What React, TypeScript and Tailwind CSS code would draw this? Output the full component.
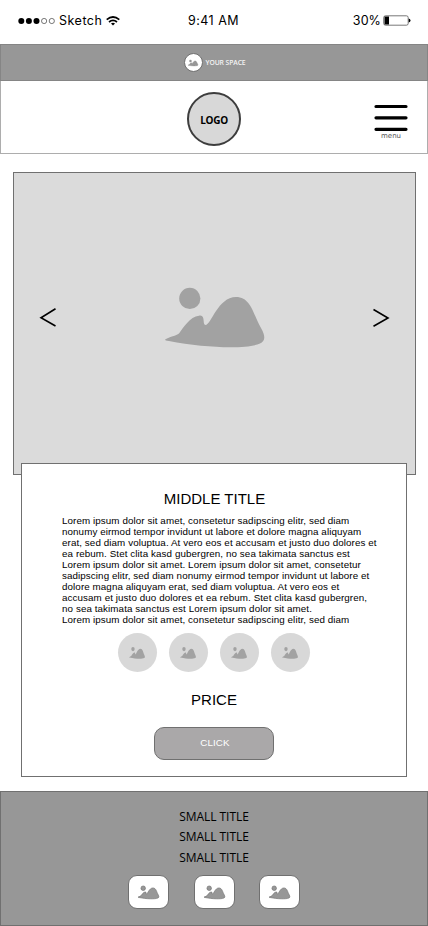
type PictureProps = { className?: string; outlined?: boolean };

function Picture({ className = "", outlined = false }: PictureProps) {
  return (
    <svg
      viewBox="0 0 100 60"
      preserveAspectRatio="none"
      className={`block shrink-0 overflow-visible ${className}`}
      fill={outlined ? "#979797" : "#a2a2a2"}
      stroke={outlined ? "#707070" : "none"}
      strokeWidth={outlined ? 3 : 0}
    >
      <circle cx="24.8" cy="10.4" r="10.6" />
      <path d="M1 51 C5 48.500 11 48 14 45.500 C18 40 25 28.500 34 27.700 C41 26 37 37 40.500 37 C46 37 53 9 71 9 C86 9 88 26 96 40 C101 49 100 53 95 55.500 C82 61.500 40 60 4 53 C0 52.500 -1 52 1 51 Z" />
    </svg>
  );
}

const paragraph = [
  "Lorem ipsum dolor sit amet, consetetur sadipscing elitr, sed diam",
  "nonumy eirmod tempor invidunt ut labore et dolore magna aliquyam",
  "erat, sed diam voluptua. At vero eos et accusam et justo duo dolores et",
  "ea rebum. Stet clita kasd gubergren, no sea takimata sanctus est",
  "Lorem ipsum dolor sit amet. Lorem ipsum dolor sit amet, consetetur",
  "sadipscing elitr, sed diam nonumy eirmod tempor invidunt ut labore et",
  "dolore magna aliquyam erat, sed diam voluptua. At vero eos et",
  "accusam et justo duo dolores et ea rebum. Stet clita kasd gubergren,",
  "no sea takimata sanctus est Lorem ipsum dolor sit amet.",
  "Lorem ipsum dolor sit amet, consetetur sadipscing elitr, sed diam",
];

function StatusBar() {
  return (
    <div className="grid h-11 grid-cols-3 items-center whitespace-nowrap pb-[3px] pl-[18px] pr-[17px] font-['Inter',sans-serif] text-[12.5px] leading-4 tracking-[0.25px] text-black">
      <div className="flex items-center">
        <svg width="38" height="8" viewBox="0 0 38 8">
          <circle cx="3.300" cy="4" r="3" />
          <circle cx="10.900" cy="4" r="3" />
          <circle cx="18.500" cy="4" r="3" />
          <circle cx="26.100" cy="4" r="2.600" fill="none" stroke="#222" strokeWidth=".6" />
          <circle cx="33.800" cy="4" r="2.600" fill="none" stroke="#222" strokeWidth=".6" />
        </svg>
        <span className="ml-[3px] w-[44px] tracking-[0.5px]">Sketch</span>
        <svg width="14" height="10" viewBox="0 0 14 10" className="ml-[3px]" fill="none" stroke="#000" strokeWidth="1.700">
          <path d="M.7 3.700 Q7 -1.700 13.300 3.700" />
          <path d="M3 6 Q7 2.700 11 6" />
          <path d="M5 7.500 Q7 6 9 7.500 L7 9.500 Z" fill="#000" stroke="none" />
        </svg>
      </div>
      <div className="pr-0.5 text-center tracking-[0.5px]">9:41 AM</div>
      <div className="flex items-center justify-end">
        <span className="tracking-[0.1px]">30%</span>
        <svg width="28" height="12" viewBox="0 0 28 12" className="ml-[2px]">
          <rect x=".7" y=".8" width="24.500" height="9.400" rx="1.800" fill="none" stroke="#555" strokeWidth=".8" />
          <rect x="1.500" y="1.500" width="4.500" height="8" />
          <path d="M25.700 3.500 Q27.500 4 27.500 5.500 Q27.500 7 25.700 7.500 Z" />
        </svg>
      </div>
    </div>
  );
}

export default function App() {
  return (
    <div className="flex h-[926px] w-[428px] flex-col overflow-hidden bg-white font-['Liberation_Sans',Arial,sans-serif] text-black">
      <StatusBar />
      <div className="flex h-[37px] items-center justify-center gap-[3px] border border-[#858585] bg-[#979797] pl-px">
        <div className="flex h-[19px] w-[19px] items-center justify-center rounded-full border border-[#707070] bg-white">
          <Picture className="h-[6px] w-[10px]" outlined />
        </div>
        <span className="w-10 whitespace-nowrap pt-0.5 font-['Open_Sans',sans-serif] text-[6.8px] leading-none font-semibold tracking-[-0.1px] text-[#f4f4f4]">
          YOUR SPACE
        </span>
      </div>

      <header className="grid h-[73px] grid-cols-3 items-center border-x border-b border-[#adadad] pt-1">
        <div />
        <div className="flex h-[54px] w-[54px] items-center justify-center justify-self-center rounded-full border-2 border-[#3d3d3d] bg-[#d8d8d8] pt-px font-['Open_Sans',sans-serif] text-[10px] leading-none font-bold tracking-[-0.3px]">
          LOGO
        </div>
        <button className="mt-1.5 mr-[19px] flex w-[34px] flex-col items-center justify-self-end">
          <svg width="34" height="28" viewBox="0 0 34 28" stroke="#000" strokeWidth="3.200" strokeLinecap="round">
            <path d="M2 2.500H32 M2 13.800H32 M2 25.300H32" />
          </svg>
          <span className="font-['DejaVu_Sans',sans-serif] text-[7px] leading-[8px] text-[#555]">menu</span>
        </button>
      </header>

      <section className="mt-[18px] ml-[13px] flex h-[303px] w-[403px] shrink-0 items-center justify-between border border-[#707070] bg-[#dbdbdb] px-[25px] pb-3">
        <svg width="18" height="20" viewBox="0 0 18 20" fill="none" stroke="#000" strokeWidth="1.600">
          <path d="M16.500 .7L2 9.700L16.500 18" />
        </svg>
        <Picture className="h-[60px] w-[100px]" />
        <svg width="18" height="20" viewBox="0 0 18 20" fill="none" stroke="#000" strokeWidth="1.600">
          <path d="M1.500 1.500L16 10L1.500 18.300" />
        </svg>
      </section>

      <main className="relative ml-[21px] -mt-3 flex h-[314px] w-[386px] shrink-0 flex-col items-center border border-[#707070] bg-white">
        <h1 className="mt-[26px] pl-px text-[15px] leading-[18px]">MIDDLE TITLE</h1>
        <div className="mt-[7px] w-[304px] self-start whitespace-nowrap pl-10 text-[9.800px] leading-[11px] tracking-[0.09px]">
          {paragraph.map((line, i) => (
            <p key={i}>{line}</p>
          ))}
        </div>
        <div className="mt-2 flex gap-3">
          {[0, 1, 2, 3].map((i) => (
            <div key={i} className="flex h-[39px] w-[39px] items-center justify-center rounded-full bg-[#d8d8d8] pr-px">
              <Picture className="h-3 w-4" />
            </div>
          ))}
        </div>
        <h2 className="mt-[19px] text-[15px] leading-[18px]">PRICE</h2>
        <button className="mt-[18px] flex h-[33px] w-[120px] items-center justify-center rounded-[10px] border border-[#707070] bg-[#aaa8a9] pl-0.5 text-[9.800px] tracking-[0.1px] text-white">
          CLICK
        </button>
      </main>

      <footer className="mt-[14px] flex h-[135px] shrink-0 flex-col items-center border border-[#707070] bg-[#979797] pt-[15px]">
        <div className="font-['Open_Sans',sans-serif] text-[12px] leading-[20.400px] tracking-[-0.05px]">
          <p>SMALL TITLE</p>
          <p>SMALL TITLE</p>
          <p>SMALL TITLE</p>
        </div>
        <div className="mt-[7px] flex gap-[25px]">
          {[0, 1, 2].map((i) => (
            <div key={i} className="flex h-[34px] w-[41px] items-center justify-center rounded-[9px] border border-[#707070] bg-white last:-ml-px">
              <Picture className="h-[13px] w-[21px]" outlined />
            </div>
          ))}
        </div>
      </footer>
    </div>
  );
}
